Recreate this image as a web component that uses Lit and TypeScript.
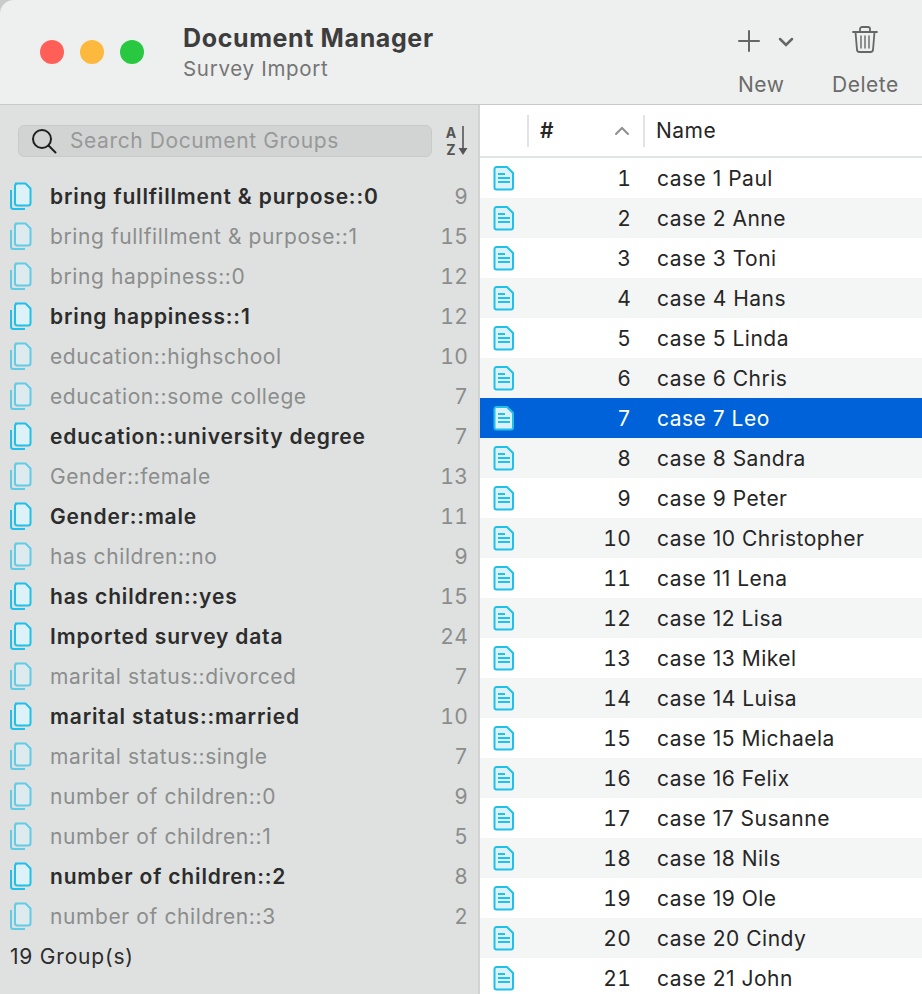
import { LitElement, html, css, svg } from "lit";
import { customElement } from "lit/decorators.js";

const groups: [string, number, boolean][] = [
  ["bring fullfillment & purpose::0", 9, true],
  ["bring fullfillment & purpose::1", 15, false],
  ["bring happiness::0", 12, false],
  ["bring happiness::1", 12, true],
  ["education::highschool", 10, false],
  ["education::some college", 7, false],
  ["education::university degree", 7, true],
  ["Gender::female", 13, false],
  ["Gender::male", 11, true],
  ["has children::no", 9, false],
  ["has children::yes", 15, true],
  ["Imported survey data", 24, true],
  ["marital status::divorced", 7, false],
  ["marital status::married", 10, true],
  ["marital status::single", 7, false],
  ["number of children::0", 9, false],
  ["number of children::1", 5, false],
  ["number of children::2", 8, true],
  ["number of children::3", 2, false],
];

const cases = [
  "Paul", "Anne", "Toni", "Hans", "Linda", "Chris", "Leo", "Sandra", "Peter", "Christopher", "Lena",
  "Lisa", "Mikel", "Luisa", "Michaela", "Felix", "Susanne", "Nils", "Ole", "Cindy", "John",
];

const groupIcon = svg`<svg class="gicon" width="24" height="30" viewBox="0 0 24 30" fill="none">
  <path d="M6 2.500h10.500l5 5V22a2.500 2.500 0 0 1-2.500 2.500H8.500A2.500 2.500 0 0 1 6 22V5a2.500 2.500 0 0 1 2.500-2.500z" fill="#dcf1f8" stroke="#1fc1ea" stroke-width="2"/>
  <path d="M2 9v16.500A2.500 2.500 0 0 0 4.500 28H16" stroke="#1fc1ea" stroke-width="2"/>
</svg>`;

const docIcon = svg`<svg width="22" height="26" viewBox="0 0 22 26" fill="none">
  <path d="M3.500 2H14l6 6v14.500a2 2 0 0 1-2 2H3.500a2 2 0 0 1-2-2V4a2 2 0 0 1 2-2z" fill="#dcf1f8" stroke="#1fc1ea" stroke-width="2"/>
  <path d="M5 9h7M5 13h12M5 17h12" stroke="#1fc1ea" stroke-width="2"/>
</svg>`;

@customElement("app-root")
class AppRoot extends LitElement {
  static styles = css`
    :host {
      display: block;
      width: 922px;
      height: 994px;
      overflow: hidden;
      background: #c9cbcb;
      font-family: Inter, "Noto Sans", sans-serif;
      color: #262626;
    }

    .titlebar {
      height: 105px;
      box-sizing: border-box;
      display: flex;
      align-items: flex-start;
      background: #eef0ef;
      border-top-left-radius: 14px;
      border-bottom: 1px solid #c8caca;
    }
    .lights {
      flex: none;
      display: flex;
      gap: 16px;
      padding: 40px 0 0 40px;
      width: 183px;
      box-sizing: border-box;
    }
    .light {
      width: 24px;
      height: 24px;
      border-radius: 50%;
    }
    .heading {
      flex: 1;
      padding-top: 22px;
    }
    .title {
      font-size: 25px;
      font-weight: 700;
      line-height: 32px;
      letter-spacing: 0.62px;
      color: #3d3d3d;
    }
    .subtitle {
      font-size: 20.500px;
      line-height: 30px;
      letter-spacing: 0.7px;
      color: #757575;
    }
    .tools {
      flex: none;
      display: flex;
      width: 184px;
      color: #6b6b6b;
      font-size: 21px;
      letter-spacing: 0.5px;
    }
    .tool {
      display: flex;
      flex-direction: column;
      align-items: center;
      padding-top: 24px;
    }
    .tool svg {
      display: block;
    }
    .tool span {
      line-height: 26px;
      margin-top: 14px;
    }
    .tool.new {
      width: 94px;
      align-items: flex-start;
    }

    .main {
      display: grid;
      grid-template-columns: 480px 1fr;
      height: 889px;
    }

    .side {
      background: #dfe1e0;
      border-right: 2px solid #d2d4d4;
      box-sizing: border-box;
    }
    .searchrow {
      display: flex;
      align-items: center;
      gap: 12px;
      padding: 19px 8px 0 18px;
      height: 52px;
      box-sizing: border-box;
    }
    .search {
      flex: 1;
      height: 32px;
      box-sizing: border-box;
      display: flex;
      align-items: center;
      gap: 13px;
      padding-left: 12px;
      background: #d2d4d3;
      border: 1px solid #c9cbca;
      border-radius: 6px;
      color: #979999;
      font-size: 21px;
      letter-spacing: 0.6px;
    }
    .sort {
      flex: none;
      width: 26px;
      height: 32px;
      display: flex;
      color: #555;
    }
    .letters {
      width: 14px;
      margin-top: -1px;
      font-size: 14px;
      font-weight: 700;
      line-height: 17px;
      text-align: center;
    }
    .list {
      padding-top: 19px;
    }
    .grow {
      height: 40px;
      display: grid;
      grid-template-columns: 50px 1fr auto;
      align-items: center;
      padding-right: 10px;
      font-size: 21px;
      letter-spacing: 0.6px;
      color: #8b8d8d;
    }
    .gicon {
      display: block;
      margin-left: 9px;
      opacity: 0.65;
    }
    .grow.on {
      color: #2c2c2c;
      font-weight: 600;
      letter-spacing: 0.83px;
    }
    .grow.on .gicon {
      opacity: 1;
    }
    .grow .count {
      color: #8b8d8d;
      font-weight: 400;
      font-variant-numeric: tabular-nums;
      letter-spacing: 0.2px;
    }
    .footer {
      padding-left: 10px;
      font-size: 21px;
      line-height: 42px;
      letter-spacing: 0.8px;
      color: #2c2c2c;
    }

    .table {
      background: #fff;
      overflow: hidden;
    }
    .thead {
      height: 53px;
      box-sizing: border-box;
      display: grid;
      grid-template-columns: 47px 116px 1fr;
      align-items: center;
      border-bottom: 2px solid #e2e3e3;
      font-size: 21px;
      letter-spacing: 0.5px;
      color: #262626;
    }
    .th {
      height: 32px;
      display: flex;
      align-items: center;
      justify-content: space-between;
      box-sizing: border-box;
      border-left: 2px solid #e2e3e3;
      padding: 0 13px 0 11px;
    }
    .th.hash {
      font-weight: 600;
    }
    .row {
      height: 40px;
      display: grid;
      grid-template-columns: 47px 104px 1fr;
      align-items: center;
      font-size: 21px;
      letter-spacing: 0.5px;
      color: #262626;
    }
    .row:nth-child(even) {
      background: #f4f5f5;
    }
    .row.selected {
      background: #0062d9;
      color: #fff;
    }
    .row svg {
      display: block;
      margin-left: 13px;
    }
    .num {
      text-align: right;
      font-variant-numeric: tabular-nums;
      letter-spacing: 0.2px;
    }
    .name {
      padding-left: 26px;
      white-space: nowrap;
    }
  `;

  render() {
    return html`
      <div class="titlebar">
        <div class="lights">
          <div class="light" style="background:#ff5f57"></div>
          <div class="light" style="background:#fdb93d"></div>
          <div class="light" style="background:#28c840"></div>
        </div>
        <div class="heading">
          <div class="title">Document Manager</div>
          <div class="subtitle">Survey Import</div>
        </div>
        <div class="tools">
          <div class="tool new">
            <svg width="62" height="34" viewBox="0 0 62 34" fill="none" stroke="#666" stroke-linecap="round">
              <path d="M11 7v20M1 17h20" stroke-width="2"/>
              <path d="M42 15l6 6 6-6" stroke-width="2.500"/>
            </svg>
            <span>New</span>
          </div>
          <div class="tool">
            <svg width="28" height="34" viewBox="0 0 28 34" fill="none" stroke="#666" stroke-width="1.800" stroke-linecap="round">
              <path d="M2 8h24M9 8V5a2 2 0 0 1 2-2h6a2 2 0 0 1 2 2v3"/>
              <path d="M4.500 8l1.500 18a2.500 2.500 0 0 0 2.500 2h11a2.500 2.500 0 0 0 2.500-2l1.500-18"/>
              <path d="M10 12v12M14 12v12M18 12v12" stroke-width="1.400"/>
            </svg>
            <span>Delete</span>
          </div>
        </div>
      </div>
      <div class="main">
        <div class="side">
          <div class="searchrow">
            <div class="search">
              <svg width="26" height="28" viewBox="0 0 26 28" fill="none" stroke="#1f1f1f" stroke-width="2" stroke-linecap="round">
                <circle cx="11" cy="12" r="9"/>
                <path d="M17.500 18.500l7 7"/>
              </svg>
              Search Document Groups
            </div>
            <div class="sort">
              <div class="letters">A<br />Z</div>
              <svg width="10" height="32" viewBox="0 0 10 32" fill="none">
                <path d="M5 1v26" stroke="#555" stroke-width="1.600"/>
                <path d="M0.500 23h9L5 30z" fill="#555"/>
              </svg>
            </div>
          </div>
          <div class="list">
            ${groups.map(
              ([name, n, on]) => html`
                <div class="grow ${on ? "on" : ""}">
                  ${groupIcon}
                  <span>${name}</span>
                  <span class="count">${n}</span>
                </div>
              `
            )}
          </div>
          <div class="footer">19 Group(s)</div>
        </div>
        <div class="table">
          <div class="thead">
            <div></div>
            <div class="th hash">
              #
              <svg width="16" height="10" viewBox="0 0 16 10" fill="none" stroke="#8f8f8f" stroke-width="2" stroke-linecap="round">
                <path d="M2 8l6-6 6 6"/>
              </svg>
            </div>
            <div class="th">Name</div>
          </div>
          <div class="rows">
            ${cases.map(
              (name, i) => html`
                <div class="row ${i === 6 ? "selected" : ""}">
                  ${docIcon}
                  <div class="num">${i + 1}</div>
                  <div class="name">case ${i + 1} ${name}</div>
                </div>
              `
            )}
          </div>
        </div>
      </div>
    `;
  }
}
